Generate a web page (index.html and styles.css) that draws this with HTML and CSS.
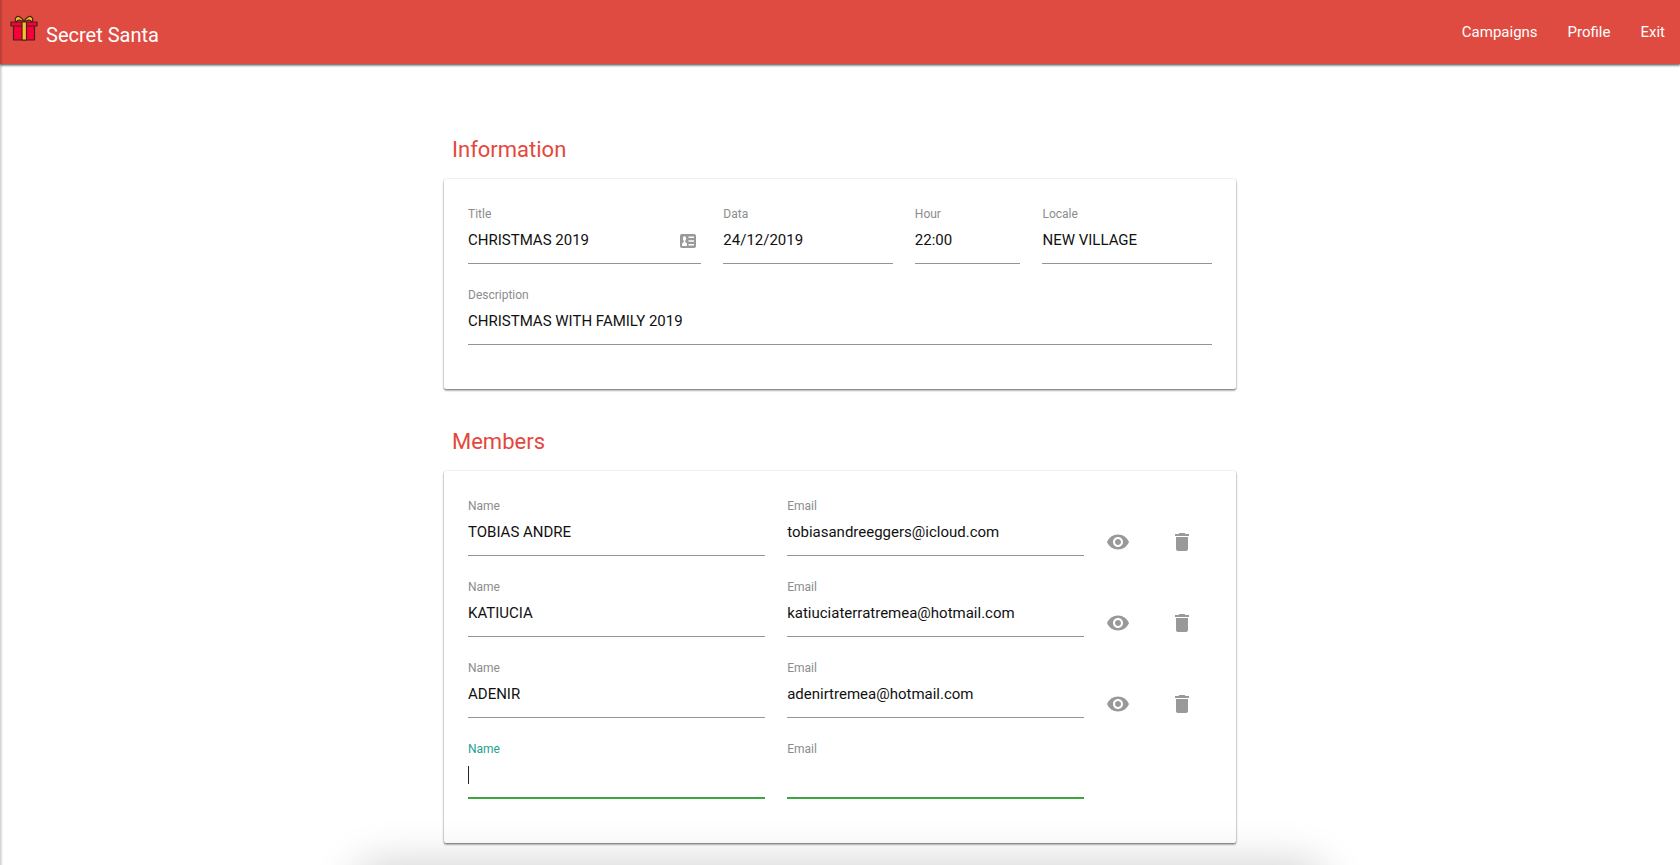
FILE: index.html
```
<!DOCTYPE html>
<html lang="en">
<head>
<meta charset="utf-8">
<title>Secret Santa</title>
<link rel="stylesheet" href="styles.css">
</head>
<body>
<svg class="sprite" aria-hidden="true">
  <symbol id="eye" viewBox="0 0 24 24"><path d="M12 4.5C7 4.5 2.73 7.61 1 12c1.73 4.39 6 7.5 11 7.5s9.27-3.11 11-7.5c-1.73-4.39-6-7.5-11-7.5zM12 17c-2.76 0-5-2.24-5-5s2.240-5 5-5 5 2.240 5 5-2.240 5-5 5zm0-8c-1.660 0-3 1.340-3 3s1.340 3 3 3 3-1.340 3-3-1.340-3-3-3z"/></symbol>
  <symbol id="trash" viewBox="0 0 24 24"><path d="M6 19c0 1.100.9 2 2 2h8c1.100 0 2-.9 2-2V7H6v12zM19 4h-3.500l-1-1h-5l-1 1H5v2h14V4z"/></symbol>
</svg>
<header class="navbar">
  <a class="brand" href="#">
    <svg class="gift" viewBox="0 0 28 28" aria-hidden="true">
      <g stroke="#4a2018" stroke-width="1.200" stroke-linejoin="round">
        <path d="M3.500 10h21v15h-21z" fill="#f8003c"/>
        <path d="M1 7h26v4H1z" fill="#f8003c"/>
        <path d="M12 7h4.500v18H12z" fill="#f5c02f"/>
        <path d="M14 6.500C12 2.500 8.500.5 6.500 2S5 6.500 6.500 7c.5-1.500 1.500-2 3-1.800 1.500.3 3 1.300 4.500 1.300zM14 6.500C16 2.500 19.500.5 21.500 2S23 6.500 21.500 7c-.5-1.500-1.500-2-3-1.800-1.500.3-3 1.300-4.500 1.300z" fill="#f5c02f"/>
      </g>
    </svg>
    <span>Secret Santa</span>
  </a>
  <nav class="links">
    <a href="#">Campaigns</a>
    <a href="#">Profile</a>
    <a href="#">Exit</a>
  </nav>
</header>
<main class="page">
  <section>
    <h2 class="heading">Information</h2>
    <form class="card">
      <div class="field span-4">
        <label for="title">Title</label>
        <div class="with-action">
          <input id="title" type="text" value="CHRISTMAS 2019">
          <button class="autofill" type="button" aria-label="Fill from contacts">
            <svg viewBox="0 0 16 14" aria-hidden="true"><rect width="16" height="14" rx="2" fill="#999"/><ellipse cx="4.500" cy="4.500" rx="1.700" ry="2.300" fill="#fff"/><path d="M3.800 6h1.400v2l1.800 1.500V12H2V9.500L3.800 8z" fill="#fff"/><path d="M8.500 2.500H14V4H8.500zM8.500 6.300H14v1.500H8.500zM8.500 10H14v1.500H8.500z" fill="#fff"/></svg>
          </button>
        </div>
      </div>
      <div class="field span-3"><label for="date">Data</label><input id="date" type="text" value="24/12/2019"></div>
      <div class="field span-2"><label for="hour">Hour</label><input id="hour" type="text" value="22:00"></div>
      <div class="field span-3"><label for="locale">Locale</label><input id="locale" type="text" value="NEW VILLAGE"></div>
      <div class="field span-12"><label for="description">Description</label><input id="description" type="text" value="CHRISTMAS WITH FAMILY 2019"></div>
    </form>
  </section>
  <section>
    <h2 class="heading">Members</h2>
    <form class="card">
      <div class="field span-5"><label for="name1">Name</label><input id="name1" type="text" value="TOBIAS ANDRE"></div>
      <div class="field span-5"><label for="email1">Email</label><input id="email1" type="email" value="tobiasandreeggers@icloud.com"></div>
      <button class="icon" type="button" aria-label="View"><svg><use href="#eye"/></svg></button>
      <button class="icon" type="button" aria-label="Delete"><svg><use href="#trash"/></svg></button>

      <div class="field span-5"><label for="name2">Name</label><input id="name2" type="text" value="KATIUCIA"></div>
      <div class="field span-5"><label for="email2">Email</label><input id="email2" type="email" value="katiuciaterratremea@hotmail.com"></div>
      <button class="icon" type="button" aria-label="View"><svg><use href="#eye"/></svg></button>
      <button class="icon" type="button" aria-label="Delete"><svg><use href="#trash"/></svg></button>

      <div class="field span-5"><label for="name3">Name</label><input id="name3" type="text" value="ADENIR"></div>
      <div class="field span-5"><label for="email3">Email</label><input id="email3" type="email" value="adenirtremea@hotmail.com"></div>
      <button class="icon" type="button" aria-label="View"><svg><use href="#eye"/></svg></button>
      <button class="icon" type="button" aria-label="Delete"><svg><use href="#trash"/></svg></button>

      <div class="field span-5 valid active"><label for="name4">Name</label><input id="name4" type="text"></div>
      <div class="field span-5 valid"><label for="email4">Email</label><input id="email4" type="email"></div>
    </form>
  </section>
</main>
<div class="edge-shade"></div>
<div class="bottom-shade"></div>
</body>
</html>
```
FILE: styles.css
```
* { box-sizing: border-box; }

body {
  margin: 0;
  min-height: 100vh;
  background: #fff;
  color: #111;
  font-family: Roboto, "Liberation Sans", sans-serif;
  font-size: 15px;
}

.sprite { display: none; }

.navbar {
  display: flex;
  align-items: center;
  justify-content: space-between;
  height: 64px;
  padding: 0 15px 0 10px;
  background: #df4b41;
  box-shadow: 0 2px 2px rgba(0, 0, 0, 0.25), 0 1px 2px rgba(0, 0, 0, 0.5);
}

.navbar a { color: #fff; text-decoration: none; }

.brand {
  display: flex;
  align-items: flex-start;
  gap: 8px;
  padding-bottom: 3px;
  font-size: 20px;
  line-height: 24px;
}

.brand span { padding-top: 8px; }

.gift { width: 28px; height: 28px; }

.links { display: flex; gap: 30px; line-height: 24px; }

.page {
  max-width: 792px;
  margin: 0 auto;
  padding: 69px 0 22px;
}

.heading {
  margin: 0;
  padding: 0 8px;
  color: #e5473c;
  font-size: 22px;
  font-weight: 400;
  line-height: 34px;
}

.card {
  display: grid;
  grid-template-columns: repeat(12, 1fr);
  column-gap: 22px;
  row-gap: 18px;
  margin: 12px 0 36px;
  padding: 22px 24px 44px;
  border-radius: 2px;
  background: #fff;
  box-shadow: 0 2px 2px rgba(0, 0, 0, 0.18), 0 1px 2px rgba(0, 0, 0, 0.4), 0 0 2px rgba(0, 0, 0, 0.15);
}

section:last-child .card { margin-bottom: 0; }

.field { display: flex; flex-direction: column; min-width: 0; }

.field label {
  color: #8c8c8c;
  font-size: 12px;
  line-height: 26px;
}

.field input {
  width: 100%;
  height: 37px;
  padding: 0 0 10px;
  border: 0;
  border-bottom: 1px solid #949494;
  outline: 0;
  background: transparent;
  color: #111;
  font: inherit;
}

.span-2 { grid-column: span 2; }
.span-3 { grid-column: span 3; }
.span-4 { grid-column: span 4; }
.span-5 { grid-column: span 5; }
.span-12 { grid-column: span 12; }

.with-action { position: relative; }

.autofill {
  position: absolute;
  top: 7px;
  right: 5px;
  padding: 0;
  border: 0;
  background: none;
}

.autofill svg { display: block; width: 16px; height: 14px; }

.icon {
  align-self: end;
  width: 24px;
  height: 24px;
  margin-bottom: 2px;
  padding: 0;
  border: 0;
  background: none;
  fill: #999;
}

.icon svg { display: block; width: 24px; height: 24px; }

.valid input { border-bottom: 2px solid #3fa63f; }

.active label { color: #26a093; }

.active input {
  background: linear-gradient(#222, #222) 0 4px / 1px 18px no-repeat;
  caret-color: transparent;
}

.edge-shade {
  position: fixed;
  inset: 0 auto 0 0;
  width: 3px;
  background: linear-gradient(90deg, rgba(0, 0, 0, 0.2), rgba(0, 0, 0, 0));
  pointer-events: none;
}

.bottom-shade {
  position: fixed;
  right: 22%;
  bottom: -42px;
  left: 22%;
  height: 30px;
  border-radius: 8px;
  box-shadow: 0 0 44px 14px rgba(0, 0, 0, 0.18);
  pointer-events: none;
}
```
